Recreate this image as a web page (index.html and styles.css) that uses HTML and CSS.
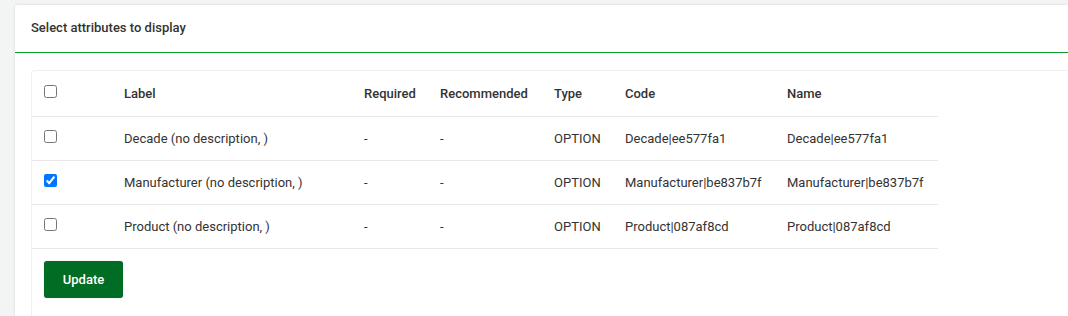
FILE: index.html
```html
<!DOCTYPE html>
<html>
<head>
<meta charset="utf-8">
<link rel="stylesheet" href="styles.css">
</head>
<body>
<div class="card">
  <div class="card-header">Select attributes to display</div>
  <div class="card-body">
    <div class="panel">
      <table class="attr-table">
        <thead>
          <tr>
            <th class="c-check"><input type="checkbox"></th>
            <th class="c-label">Label</th>
            <th class="c-req">Required</th>
            <th class="c-rec">Recommended</th>
            <th class="c-type">Type</th>
            <th class="c-code">Code</th>
            <th class="c-name">Name</th>
          </tr>
        </thead>
        <tbody>
          <tr>
            <td class="c-check"><input type="checkbox"></td>
            <td>Decade (no description, )</td>
            <td>-</td>
            <td>-</td>
            <td>OPTION</td>
            <td>Decade|ee577fa1</td>
            <td>Decade|ee577fa1</td>
          </tr>
          <tr>
            <td class="c-check"><input type="checkbox" checked></td>
            <td>Manufacturer (no description, )</td>
            <td>-</td>
            <td>-</td>
            <td>OPTION</td>
            <td>Manufacturer|be837b7f</td>
            <td>Manufacturer|be837b7f</td>
          </tr>
          <tr>
            <td class="c-check"><input type="checkbox"></td>
            <td>Product (no description, )</td>
            <td>-</td>
            <td>-</td>
            <td>OPTION</td>
            <td>Product|087af8cd</td>
            <td>Product|087af8cd</td>
          </tr>
        </tbody>
      </table>
      <div class="actions">
        <button class="btn-update">Update</button>
      </div>
    </div>
  </div>
</div>
</body>
</html>
```
FILE: styles.css
```css
html, body {
  margin: 0;
  padding: 0;
  background: #f3f4f4;
  font-family: Roboto, "Liberation Sans", Arial, sans-serif;
  font-size: 13px;
  color: #333;
  overflow: hidden;
}

.card {
  margin: 5px 0 0 15px;
  background: #fff;
  box-shadow: 0 0 3px rgba(0, 0, 0, 0.12);
  border-radius: 2px 0 0 0;
  min-height: 400px;
}

.card-header {
  height: 48px;
  box-sizing: border-box;
  padding: 0 16px 2px;
  display: flex;
  align-items: center;
  font-weight: 500;
  color: #333;
  border-bottom: 1px solid #0a9b2d;
  font-size: 13px;
}

.card-body {
  padding: 18px 0 0 17px;
}

.panel {
  border: 1px solid #f0f0f0;
  border-right: none;
  border-radius: 4px 0 0 0;
  min-height: 300px;
  margin-top: -1px;
  margin-left: -1px;
}

.attr-table {
  border-collapse: collapse;
  table-layout: fixed;
  width: 906px;
}

.attr-table th,
.attr-table td {
  text-align: left;
  padding: 0;
  white-space: nowrap;
  vertical-align: middle;
  border-bottom: 1px solid #e8e8e8;
}

.attr-table th {
  height: 45px;
  font-weight: 500;
}

.attr-table td {
  height: 43px;
}

.attr-table tr > :first-child { padding-left: 12px; }

.c-check { width: 80px; }
.c-label { width: 240px; }
.c-req { width: 76px; }
.c-rec { width: 114px; }
.c-type { width: 71px; }
.c-code { width: 162px; }
.c-name { width: 151px; }

input[type="checkbox"] {
  margin: 0;
  width: 13px;
  height: 13px;
  display: block;
  position: relative;
  top: -2px;
}

.actions {
  padding: 12px 12px 0;
}

.btn-update {
  width: 79px;
  height: 37px;
  border: none;
  border-radius: 3px;
  background: #006c24;
  color: #fff;
  font-family: Roboto, "Liberation Sans", Arial, sans-serif;
  font-size: 13px;
  font-weight: 500;
  cursor: pointer;
  box-shadow: 0 0 1px rgba(0,0,0,0.3);
}
```
